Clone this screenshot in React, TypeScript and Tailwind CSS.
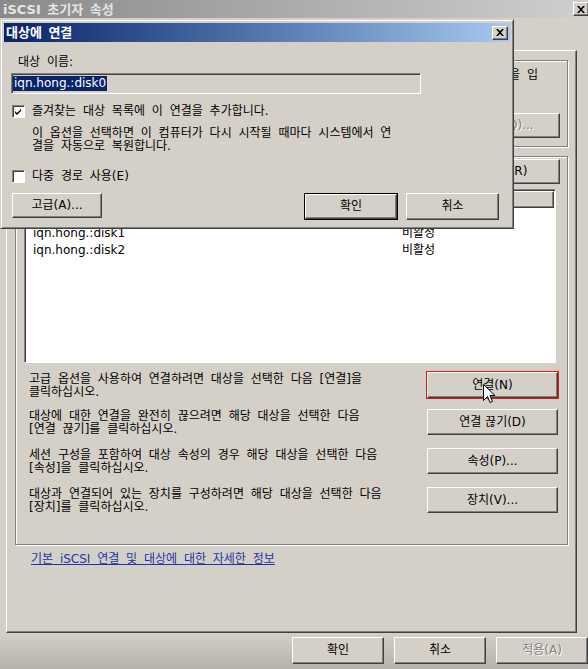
import React from 'react';

const raised =
  'border border-t-white border-l-white border-r-[#404040] border-b-[#404040] shadow-[inset_-1px_-1px_0_#808080]';
const sunken =
  'border border-t-[#808080] border-l-[#808080] border-r-white border-b-white shadow-[inset_1px_1px_0_#404040]';
const etched = 'border border-[#808080] shadow-[1px_1px_0_white,inset_1px_1px_0_white]';

function Btn({
  label,
  className = '',
  disabled = false,
}: {
  label: string;
  className?: string;
  disabled?: boolean;
}) {
  return (
    <button className={`${raised} bg-[#d4d0c8] flex items-center justify-center shrink-0 ${className}`}>
      <span className={disabled ? 'text-[#808080] [text-shadow:1px_1px_0_white]' : ''}>{label}</span>
    </button>
  );
}

function CheckBox({ checked }: { checked: boolean }) {
  return (
    <div className={`${sunken} w-[13px] h-[13px] bg-white flex items-center justify-center shrink-0`}>
      {checked && (
        <svg width="9" height="9" viewBox="0 0 9 9">
          <path d="M1 4 L3 6 L7 2 L7 4 L3 8 L1 6 Z" fill="black" />
        </svg>
      )}
    </div>
  );
}

function CloseX() {
  return (
    <svg width="8" height="7" viewBox="0 0 8 7">
      <path d="M0 0 L2 0 L4 2.2 L6 0 L8 0 L5 3.5 L8 7 L6 7 L4 4.8 L2 7 L0 7 L3 3.5 Z" fill="black" />
    </svg>
  );
}

const actions = [
  { text: ['고급 옵션을 사용하여 연결하려면 대상을 선택한 다음 [연결]을', '클릭하십시오.'], btn: '연결(N)', mt: '', mark: true },
  { text: ['대상에 대한 연결을 완전히 끊으려면 해당 대상을 선택한 다음', '[연결 끊기]를 클릭하십시오.'], btn: '연결 끊기(D)', mt: 'mt-[10px]', mark: false },
  { text: ['세션 구성을 포함하여 대상 속성의 경우 해당 대상을 선택한 다음', '[속성]을 클릭하십시오.'], btn: '속성(P)...', mt: 'mt-[12px]', mark: false },
  { text: ['대상과 연결되어 있는 장치를 구성하려면 해당 대상을 선택한 다음', '[장치]를 클릭하십시오.'], btn: '장치(V)...', mt: 'mt-[12px]', mark: false },
];

// first row sits under the dialog
const targets = [
  { name: '', state: '' },
  { name: 'iqn.hong.:disk1', state: '비활성' },
  { name: 'iqn.hong.:disk2', state: '비활성' },
];

export default function App() {
  return (
    <div className="relative w-[588px] h-[669px] overflow-hidden bg-[#d4d0c8] text-[12px] leading-[13px] text-black font-['DejaVu_Sans','Noto_Sans_CJK_KR',sans-serif] [word-spacing:3px]">
      {/* parent window title */}
      <div className="h-[18px] flex items-center justify-between bg-gradient-to-r from-[#8a8a8a] to-[#cfcfcf] pl-[3px]">
        <span className="font-bold text-[13px] text-[#e6e5e2] [word-spacing:2px]">iSCSI 초기자 속성</span>
        <div className={`${raised} bg-[#d4d0c8] w-[16px] h-[14px] mr-[-1px] flex items-center justify-center`}>
          <CloseX />
        </div>
      </div>

      {/* tabs strip */}
      <div className="h-[32px]" />

      {/* tab pane */}
      <div className={`${raised} ml-[6px] w-[571px] h-[583px] flex flex-col pl-[8px] pt-[9px]`}>
        {/* quick connect */}
        <div className={`${etched} w-[553px] h-[87px] flex flex-col pt-[8px] pr-[7px]`}>
          <div className="text-right whitespace-nowrap h-[26px] pr-[22px]">이름을 입</div>
          <div className="flex justify-end mt-[18px]">
            <Btn label="빠른 연결(Q)..." disabled className="w-[131px] h-[25px]" />
          </div>
        </div>

        {/* discovered targets */}
        <div className={`${etched} w-[553px] h-[389px] mt-[9px] flex flex-col pt-[2px]`}>
          <div className="flex justify-end items-center pr-[7px]">
            <Btn label="새로 고침(R)" className="w-[131px] h-[25px]" />
          </div>
          <div className={`${sunken} bg-white ml-[8px] mt-[5px] w-[532px] h-[174px] p-[1px] flex flex-col`}>
            <div className="flex h-[17px] shrink-0">
              <div className={`${raised} bg-[#d4d0c8] w-[370px]`} />
              <div className={`${raised} bg-[#d4d0c8] w-[158px]`} />
            </div>
            {targets.map((t, i) => (
              <div key={i} className="flex h-[17px] items-center pl-[7px]">
                <span className="w-[369px]">{t.name}</span>
                <span>{t.state}</span>
              </div>
            ))}
          </div>

          <div className="flex flex-col pl-[13px] pr-[9px] mt-[9px]">
            {actions.map((a) => (
              <div key={a.btn} className={`flex justify-between items-start ${a.mt}`}>
                <div className="whitespace-nowrap pt-[1px]">
                  {a.text[0]}
                  <br />
                  {a.text[1]}
                </div>
                <div className="relative">
                  <Btn label={a.btn} className="w-[131px] h-[26px]" />
                  {a.mark && <div className="absolute -inset-[1px] border border-[#ee1111]" />}
                </div>
              </div>
            ))}
          </div>
        </div>

        <a className="mt-[8px] ml-[16px] text-[#1f35a6] underline whitespace-nowrap">기본 iSCSI 연결 및 대상에 대한 자세한 정보</a>
      </div>

      {/* bottom buttons */}
      <div className="h-[36px] bg-gradient-to-b from-[#d4d0c8] to-[#b6b2ab] pt-[4px] pl-[292px] flex gap-[10px]">
        <Btn label="확인" className="w-[92px] h-[27px]" />
        <Btn label="취소" className="w-[92px] h-[27px]" />
        <Btn label="적용(A)" disabled className="w-[92px] h-[27px]" />
      </div>

      {/* connect to target dialog */}
      <div className="absolute left-0 top-[19px] w-[514px] h-[210px] bg-[#d4d0c8] border border-t-[#d4d0c8] border-l-[#d4d0c8] border-r-[#404040] border-b-[#404040] shadow-[inset_1px_1px_0_white,inset_-1px_-1px_0_#808080] p-[3px] pb-0 flex flex-col">
        <div className="h-[19px] shrink-0 flex items-center justify-between bg-gradient-to-r from-[#0a246a] to-[#a6caf0] pl-[2px] pr-[2px]">
          <span className="font-bold text-[13px] text-white [word-spacing:2px]">대상에 연결</span>
          <div className={`${raised} bg-[#d4d0c8] w-[16px] h-[14px] flex items-center justify-center`}>
            <CloseX />
          </div>
        </div>

        <div className="flex flex-col pl-[7px]">
          <div className="mt-[14px] pl-[7px] h-[13px]">대상 이름:</div>
          <div className={`${sunken} mt-[4px] w-[410px] h-[21px] bg-[#d4d0c8] flex items-center pl-[1px]`}>
            <span className="bg-[#0a246a] text-white h-[15px] flex items-center px-[1px]">iqn.hong.:disk0</span>
          </div>

          <div className="flex items-center gap-[7px] mt-[11px] pl-[1px] h-[13px]">
            <CheckBox checked />
            <span>즐겨찾는 대상 목록에 이 연결을 추가합니다.</span>
          </div>
          <div className="mt-[9px] pl-[21px] whitespace-nowrap h-[26px]">
            이 옵션을 선택하면 이 컴퓨터가 다시 시작될 때마다 시스템에서 연
            <br />
            결을 자동으로 복원합니다.
          </div>
          <div className="flex items-center gap-[7px] mt-[17px] pl-[1px] h-[13px]">
            <CheckBox checked={false} />
            <span>다중 경로 사용(E)</span>
          </div>

          <div className="flex mt-[10px] pl-[1px]">
            <Btn label="고급(A)..." className="w-[90px] h-[25px]" />
            <div className="ml-[202px] border border-black">
              <Btn label="확인" className="w-[92px] h-[25px]" />
            </div>
            <Btn label="취소" className="ml-[8px] w-[93px] h-[27px]" />
          </div>
        </div>
      </div>

      {/* mouse pointer */}
      <svg className="absolute left-[483px] top-[384px]" width="13" height="21" viewBox="0 0 13 21">
        <path d="M0.5 0.5 L0.5 16.5 L4.5 12.5 L7 18.5 L9.5 17.5 L7 11.5 L12 11.5 Z" fill="white" stroke="black" strokeWidth="1" />
      </svg>
    </div>
  );
}
